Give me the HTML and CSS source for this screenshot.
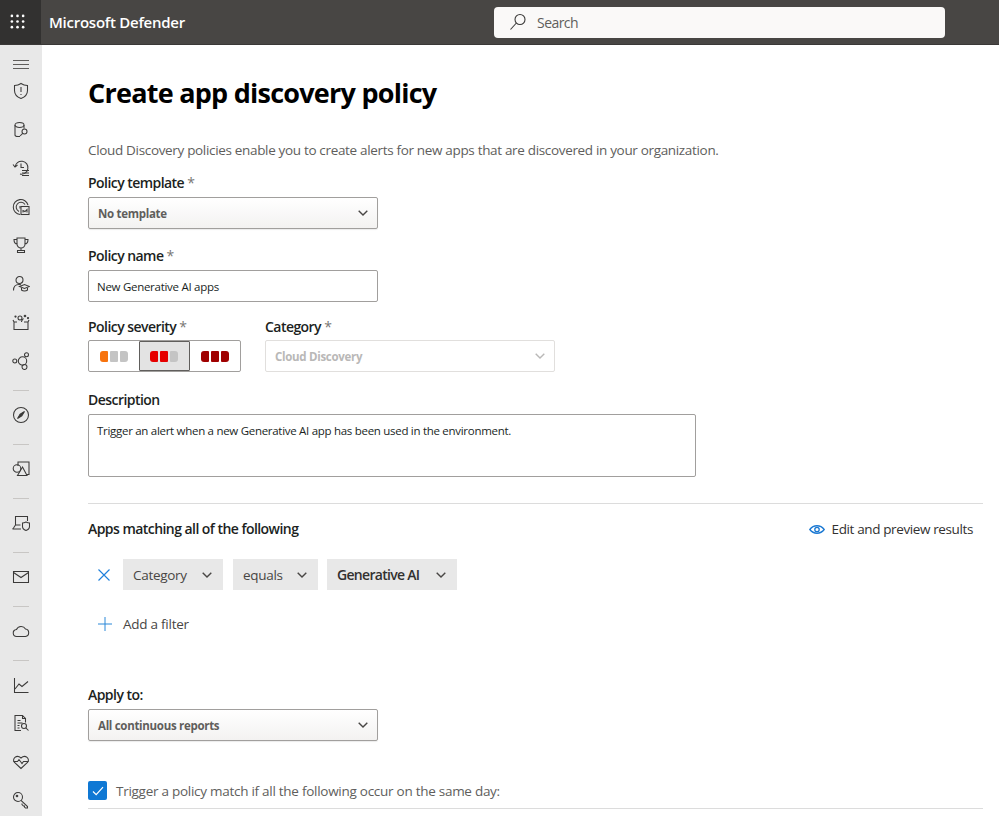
FILE: index.html
```html
<!DOCTYPE html>
<html lang="en">
<head>
<meta charset="utf-8">
<title>Create app discovery policy</title>
<link rel="stylesheet" href="styles.css">
</head>
<body>
<header class="topbar">
  <div class="waffle">
    <svg width="15" height="15" viewBox="0 0 16 16" fill="#fff"><circle cx="2" cy="2" r="1.400"/><circle cx="8" cy="2" r="1.400"/><circle cx="14" cy="2" r="1.400"/><circle cx="2" cy="8" r="1.400"/><circle cx="8" cy="8" r="1.400"/><circle cx="14" cy="8" r="1.400"/><circle cx="2" cy="14" r="1.400"/><circle cx="8" cy="14" r="1.400"/><circle cx="14" cy="14" r="1.400"/></svg>
  </div>
  <div class="brand">Microsoft Defender</div>
  <div class="search">
    <svg class="search-icon" width="18" height="18" viewBox="0 0 18 18" fill="none" stroke="#3b3a39" stroke-width="1.100"><circle cx="11" cy="6.500" r="5"/><path d="M7.400 10 1.500 16.500"/></svg>
    <span>Search</span>
  </div>
</header>
<div class="shell">
  <nav class="rail">
    <div class="rail-burger"><svg width="16" height="9" viewBox="0 0 16 9" stroke="#605e5c" fill="none"><path d="M0 .5h16M0 4.500h16M0 8.500h16"/></svg></div>
    <div class="rail-item"><svg class="ico" viewBox="0 0 18 18"><path d="M9 1.500c2 1.400 4 2 6.500 2v5c0 4-2.500 6.500-6.500 8-4-1.500-6.500-4-6.500-8v-5c2.500 0 4.500-.6 6.500-2Z"/><path d="M9 5v5M9 12v1"/></svg></div>
    <div class="rail-item"><svg class="ico" viewBox="0 0 18 18"><path d="M3 4v10c0 1 1 1.500 3 1.500h2"/><ellipse cx="7.500" cy="4" rx="4.500" ry="2.500"/><path d="M12 4v3.500"/><circle cx="12.500" cy="10.500" r="2.500"/><path d="M10.700 12.300 8 15"/></svg></div>
    <div class="rail-item"><svg class="ico" viewBox="0 0 18 18"><path d="M3 8a6.500 6.500 0 1 1 5 7"/><path d="M1 5.500 3 8l2.500-2M9 4.500V8.500H12M10 11.500h7M10 14h7M10 16.500h7"/></svg></div>
    <div class="rail-item"><svg class="ico" viewBox="0 0 18 18"><path d="M8 16.500A7.500 7.500 0 1 1 16 7"/><path d="M7 13.500A4.800 4.800 0 1 1 13 6.500"/><path d="M8 8v2.500"/><rect x="9" y="8.500" width="8" height="8"/><path d="M11 14.500v-2l2 1 2-2v3"/></svg></div>
    <div class="rail-item"><svg class="ico" viewBox="0 0 18 18"><path d="M5 2h8v6a4 4 0 0 1-8 0ZM5 3.500H2c0 3 1 4.500 3.500 5M13 3.500h3c0 3-1 4.500-3.500 5M9 12v2.500M5.500 14.500h7v2h-7Z"/></svg></div>
    <div class="rail-item"><svg class="ico" viewBox="0 0 18 18"><circle cx="7.500" cy="5" r="3.500"/><path d="M1.500 15.500c0-3.500 2-6 5.500-6 .7 0 1.400.1 2 .3"/><path d="M7.500 11.500 12.500 9.500l5 2-5 2Z"/><path d="M9.500 13v2c1.500 1.300 4.500 1.300 6 0v-2"/></svg></div>
    <div class="rail-item"><svg class="ico" viewBox="0 0 18 18"><path d="M2 9h3M12 9h4v7.500H2V9M2 9 1 7M16 9l1-2"/><circle cx="8" cy="5" r="2"/><path d="M9.500 9c0-2 1-2 2-3.500"/><circle cx="13" cy="3" r=".8"/><circle cx="3.500" cy="3.500" r=".6"/><circle cx="16" cy="5" r=".6"/></svg></div>
    <div class="rail-item"><svg class="ico" viewBox="0 0 18 18"><circle cx="2.800" cy="9" r="2"/><circle cx="10.500" cy="9" r="4.200"/><circle cx="14.500" cy="2.800" r="2"/><circle cx="12.500" cy="15" r="2.500"/></svg></div>
    <div class="rail-sep"></div>
    <div class="rail-item"><svg class="ico" viewBox="0 0 18 18"><circle cx="9" cy="9" r="7.500"/><path d="M12.500 5.500 9.800 9.800 5.500 12.500 8.200 8.200Z" fill="#3b3a39"/></svg></div>
    <div class="rail-sep"></div>
    <div class="rail-item"><svg class="ico" viewBox="0 0 18 18"><path d="M6 6V2h11v12.500h-2"/><circle cx="5" cy="8.500" r="3.800"/><path d="M10.500 7 15 15.500H5.500Z"/></svg></div>
    <div class="rail-sep"></div>
    <div class="rail-item"><svg class="ico" viewBox="0 0 18 18"><path d="M3.500 11V2.500h12V7M1.500 14 3.500 11h5M1 14v1h8"/><path d="M10.500 9c1.500 0 2.500-.5 3.500-1 1 .5 2 1 3.500 1v3.500c0 2-1.500 3.300-3.500 4-2-.7-3.500-2-3.500-4Z"/></svg></div>
    <div class="rail-sep"></div>
    <div class="rail-item"><svg class="ico" viewBox="0 0 18 18"><path d="M1.500 3.500h15v11h-15Z"/><path d="M1.500 4.500 9 9.500l7.500-5"/></svg></div>
    <div class="rail-sep"></div>
    <div class="rail-item"><svg class="ico" viewBox="0 0 18 18"><path d="M5 14.500a3.500 3.500 0 0 1-.5-7A5 5 0 0 1 13.500 7a3.800 3.800 0 0 1 0 7.500Z"/></svg></div>
    <div class="rail-sep"></div>
    <div class="rail-item"><svg class="ico" viewBox="0 0 18 18"><path d="M2.500 2v14.500h14M3 13l4-5 3 2.500 6-5"/></svg></div>
    <div class="rail-item"><svg class="ico" viewBox="0 0 18 18"><path d="M9 16.500H3V1.500h7.500l3 3v4M10.500 1.500v3h3M5.500 6.500h3M5.500 9h5M5.500 11.500h2M5.500 14h2"/><circle cx="12" cy="12" r="2.500"/><path d="m13.800 13.800 2.700 2.700"/></svg></div>
    <div class="rail-item"><svg class="ico" viewBox="0 0 18 18"><path d="M9 15.500 2.500 9.500C-.5 6 4.500 1 9 5c4.500-4 9.500 1 6.500 4.500Z"/><path d="M1.500 8.500h4l1.500-2 3 4 1.500-2h5"/></svg></div>
    <div class="rail-item"><svg class="ico" viewBox="0 0 18 18"><circle cx="6" cy="6" r="4.500"/><circle cx="5" cy="5" r=".8"/><path d="M9 9.300 15.500 15.500v1.500h-2l-1-1v-1h-1l-1.500-1.500v-1"/></svg></div>
  </nav>
  <main class="content">
    <h1 class="title">Create app discovery policy</h1>
    <p class="intro">Cloud Discovery policies enable you to create alerts for new apps that are discovered in your organization.</p>

    <div class="field">
      <div class="label">Policy template <span class="req">*</span></div>
      <div class="select"><span>No template</span><svg class="chev" width="10" height="6" viewBox="0 0 10 6"><path d="M.7.7 5 5 9.300.7"/></svg></div>
    </div>
    <div class="field">
      <div class="label">Policy name <span class="req">*</span></div>
      <div class="input">New Generative AI apps</div>
    </div>
    <div class="field-row">
      <div class="field-sev">
        <div class="label">Policy severity <span class="req">*</span></div>
        <div class="sev-group">
          <div class="sev"><i class="pip orange"></i><i class="pip grey"></i><i class="pip grey"></i></div>
          <div class="sev sev-on"><i class="pip red"></i><i class="pip red"></i><i class="pip grey"></i></div>
          <div class="sev"><i class="pip dark"></i><i class="pip dark"></i><i class="pip dark"></i></div>
        </div>
      </div>
      <div class="field-cat">
        <div class="label">Category <span class="req">*</span></div>
        <div class="select select-off"><span>Cloud Discovery</span><svg class="chev" width="10" height="6" viewBox="0 0 10 6"><path d="M.7.7 5 5 9.300.7"/></svg></div>
      </div>
    </div>
    <div class="field">
      <div class="label">Description</div>
      <div class="textarea">Trigger an alert when a new Generative AI app has been used in the environment.</div>
    </div>

    <hr class="rule rule-a">

    <div class="apps-head">
      <div class="label">Apps matching all of the following</div>
      <div class="preview">
        <svg width="16" height="11" viewBox="0 0 16 11" fill="none" stroke="#1a78d2" stroke-width="1.300"><path d="M.8 5.500C4.500.5 11.500.5 15.200 5.500 11.500 10.500 4.500 10.500.8 5.500Z"/><circle cx="8" cy="5.500" r="2.200"/></svg>
        <span>Edit and preview results</span>
      </div>
    </div>

    <div class="filter">
      <svg class="x" width="12" height="12" viewBox="0 0 12 12"><path d="M.5.500 11.500 11.500M11.500.500.500 11.500"/></svg>
      <div class="pill pill-a"><span>Category</span><svg class="chev" width="10" height="6" viewBox="0 0 10 6"><path d="M.7.7 5 5 9.300.7"/></svg></div>
      <div class="pill pill-b"><span>equals</span><svg class="chev" width="10" height="6" viewBox="0 0 10 6"><path d="M.7.7 5 5 9.300.7"/></svg></div>
      <div class="pill pill-c"><span>Generative AI</span><svg class="chev" width="10" height="6" viewBox="0 0 10 6"><path d="M.7.7 5 5 9.300.7"/></svg></div>
    </div>

    <div class="add">
      <svg class="plus" width="14" height="14" viewBox="0 0 14 14"><path d="M7 0v14M0 7h14"/></svg>
      <span>Add a filter</span>
    </div>

    <div class="field field-apply">
      <div class="label">Apply to:</div>
      <div class="select"><span>All continuous reports</span><svg class="chev" width="10" height="6" viewBox="0 0 10 6"><path d="M.7.7 5 5 9.300.7"/></svg></div>
    </div>

    <div class="check-row">
      <div class="check"><svg width="12" height="10" viewBox="0 0 12 10" fill="none" stroke="#fff" stroke-width="1.200"><path d="M1 5.500 4.200 8.700 11 1.200"/></svg></div>
      <span>Trigger a policy match if all the following occur on the same day:</span>
    </div>
    <hr class="rule rule-b">
  </main>
</div>
</body>
</html>
```
FILE: styles.css
```css
* { box-sizing: border-box; }
html, body { margin: 0; height: 816px; overflow: hidden; }
body { font-family: "Open Sans", "Noto Sans", sans-serif; color: #201f1e; background: #fff; font-size: 14px; }

.topbar { height: 45px; background: #484644; border-bottom: 1px solid #3a3837; display: flex; align-items: center; color: #fff; }
.waffle { width: 41px; height: 44px; background: #323130; display: flex; align-items: center; justify-content: center; padding: 0 6px 2px 0; }
.brand { margin-left: 8px; width: 445px; font-size: 15px; font-weight: 600; letter-spacing: -.25px; }
.search { width: 451px; height: 31px; background: #faf9f8; border-radius: 4px; display: flex; align-items: center; padding-left: 15px; color: #605e5c; font-size: 14px; letter-spacing: -.55px; }
.search-icon { margin-right: 10px; }

.shell { display: flex; height: 771px; }
.rail { width: 42px; flex: none; background: #e8e8e8; padding-top: 12px; display: flex; flex-direction: column; align-items: center; overflow: hidden; }
.rail-burger { height: 15px; flex: none; display: flex; align-items: center; justify-content: center; }
.rail-item { height: 38.500px; width: 100%; flex: none; display: flex; align-items: center; justify-content: center; }
.rail-sep { height: 15.500px; width: 16px; flex: none; padding-top: 10px; }
.rail-sep::before { content: ""; display: block; height: 1px; background: #c8c6c4; }
.ico { width: 18px; height: 18px; fill: none; stroke: #3b3a39; stroke-width: 1.050; }

.content { flex: 1; padding: 0 16px 0 46px; min-width: 0; }
.title { margin: 30px 0 0; font-size: 27px; line-height: 36px; font-weight: 700; color: #000; letter-spacing: -.75px; }
.intro { margin: 29px 0 0; font-size: 13.500px; line-height: 20px; color: #605e5c; letter-spacing: -.33px; }

.label { font-weight: 600; line-height: 20px; color: #201f1e; letter-spacing: -.55px; }
.req { color: #797775; font-weight: 400; }

.field { margin-top: 13px; }
.field + .field { margin-top: 17px; }
.field .label { margin-bottom: 4px; }

.select { height: 32px; width: 290px; border: 1px solid #a19f9d; border-radius: 2px; background: linear-gradient(#fff, #f3f2f1); box-shadow: 0 1px 1px rgba(0,0,0,.08); display: flex; align-items: center; justify-content: space-between; padding: 0 9px; font-size: 11.500px; font-weight: 700; color: #605e5c; letter-spacing: -.3px; }
.chev { fill: none; stroke: #484644; stroke-width: 1.400; }
.input { height: 32px; width: 290px; border: 1px solid #a19f9d; border-radius: 2px; display: flex; align-items: center; padding-left: 8px; font-size: 11.500px; letter-spacing: -.28px; color: #201f1e; }

.field-row { display: flex; margin-top: 15px; }
.field-sev { width: 177px; }
.field-sev .label, .field-cat .label { margin-bottom: 3px; }
.sev-group { width: 153px; height: 32px; border: 1px solid #a19f9d; border-radius: 2px; display: flex; }
.sev { flex: 1; display: flex; align-items: center; justify-content: center; gap: 2px; }
.sev-on { background: #e3e3e3; outline: 1.500px solid #605e5c; outline-offset: -1px; border-radius: 1px; }
.pip { width: 8px; height: 11px; border-radius: 1px; display: block; }
.pip:first-child { border-radius: 3px 1px 1px 3px; }
.pip:last-child { border-radius: 1px 3px 3px 1px; }
.orange { background: #f7730e; }
.grey { background: #c4c4c4; }
.red { background: #e60000; }
.dark { background: #a00000; }
.select-off { border-color: #e1dfdd; background: #fff; box-shadow: none; color: #b9b8b7; }
.select-off .chev { stroke: #b9b8b7; }

.field-row + .field { margin-top: 18px; }
.textarea { height: 63px; width: 608px; border: 1px solid #a19f9d; border-radius: 2px; padding: 8px; font-size: 11.500px; letter-spacing: -.29px; line-height: 16px; }

.rule { border: 0; height: 1px; background: #dcdcdc; margin: 0; }
.rule-a { margin-top: 26px; width: 895px; }
.apps-head { display: flex; justify-content: space-between; align-items: center; margin-top: 15px; width: 885px; }
.preview { display: flex; align-items: center; gap: 7px; color: #323130; font-size: 13.500px; letter-spacing: -.38px; }

.filter { display: flex; align-items: center; margin-top: 20px; }
.x { fill: none; stroke: #1f80dc; stroke-width: 1.150; margin-left: 10px; margin-right: 13px; flex: none; }
.pill { height: 31px; background: #e8e8e8; display: flex; align-items: center; justify-content: space-between; padding: 0 11px 0 10px; color: #484644; font-size: 13.500px; letter-spacing: -.3px; }
.pill-a { width: 100px; margin-right: 10px; }
.pill-b { width: 85px; margin-right: 9px; }
.pill-c { width: 130px; font-weight: 600; font-size: 14px; letter-spacing: -.7px; color: #323130; }
.add { display: flex; align-items: center; margin-top: 24px; color: #484644; font-size: 13.500px; letter-spacing: -.25px; line-height: 20px; }
.plus { fill: none; stroke: #2b88d8; margin-left: 10px; margin-right: 11px; }

.field-apply { margin-top: 51px !important; }

.check-row { display: flex; align-items: center; margin-top: 40px; color: #605e5c; font-size: 13.500px; letter-spacing: -.27px; }
.check { width: 19px; height: 19px; background: #0f78d4; border-radius: 2px; display: flex; align-items: center; justify-content: center; margin-right: 9px; }
.rule-b { margin-top: 8px; width: 895px; }
```
